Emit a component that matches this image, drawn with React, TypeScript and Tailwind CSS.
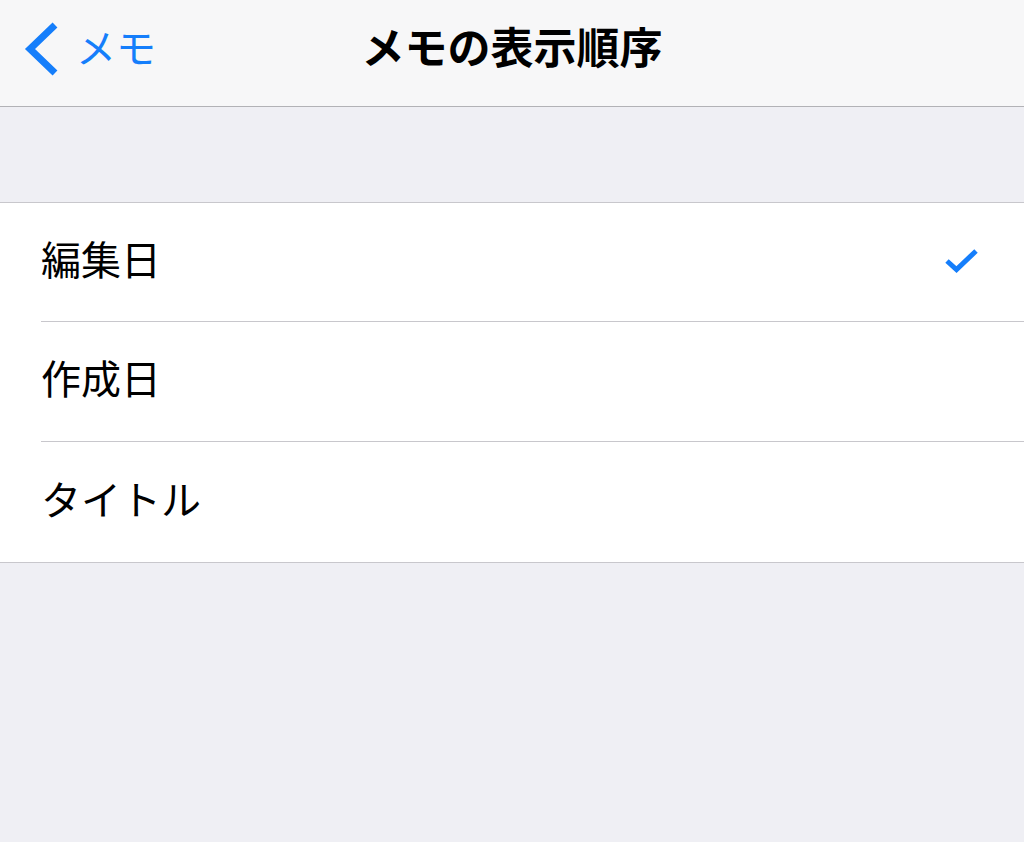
import React from "react";

const font = { fontFamily: '"Noto Sans CJK JP", "Noto Sans", sans-serif' };

function Row({ label, checked, last, first }: { label: string; checked?: boolean; last?: boolean; first?: boolean }) {
  return (
    <div className="pl-[41px] bg-white">
      <div className={`${first ? "h-[119px]" : "h-[120px]"} flex items-center justify-between pr-[44px] ${last ? "" : "border-b border-[#c8c7cc]"}`}>
        <span className="text-[40px] text-black leading-none -mt-[9px]" style={font}>{label}</span>
        {checked && (
          <svg width="36" height="28" viewBox="0 0 36 28" fill="none" className="-mt-[2px]">
            <path d="M3 14 L12.5 22.5 L32 4" stroke="#157efb" strokeWidth="5" strokeLinecap="butt" strokeLinejoin="miter" />
          </svg>
        )}
      </div>
    </div>
  );
}

export default function App() {
  return (
    <div className="w-[1024px] h-[842px] bg-[#efeff4] flex flex-col" style={font}>
      <div className="h-[107px] bg-[#f7f7f8] border-b border-[#b2b2b6] relative flex items-center justify-center shrink-0">
        <div className="absolute left-[22px] top-[22px] flex items-center">
          <svg width="38" height="54" viewBox="0 0 38 54" fill="none">
            <path d="M33 3 L8 27 L33 51" stroke="#157efb" strokeWidth="7" strokeLinecap="butt" strokeLinejoin="miter" />
          </svg>
          <span className="ml-[16px] text-[40px] text-[#157efb] leading-none -mt-[6px]">メモ</span>
        </div>
        <span className="text-[43px] font-bold text-black leading-none -mt-[16px]">メモの表示順序</span>
      </div>
      <div className="h-[95px] shrink-0" />
      <div className="border-t border-b border-[#c8c7cc] bg-white">
        <Row label="編集日" checked first />
        <Row label="作成日" />
        <Row label="タイトル" last />
      </div>
    </div>
  );
}
